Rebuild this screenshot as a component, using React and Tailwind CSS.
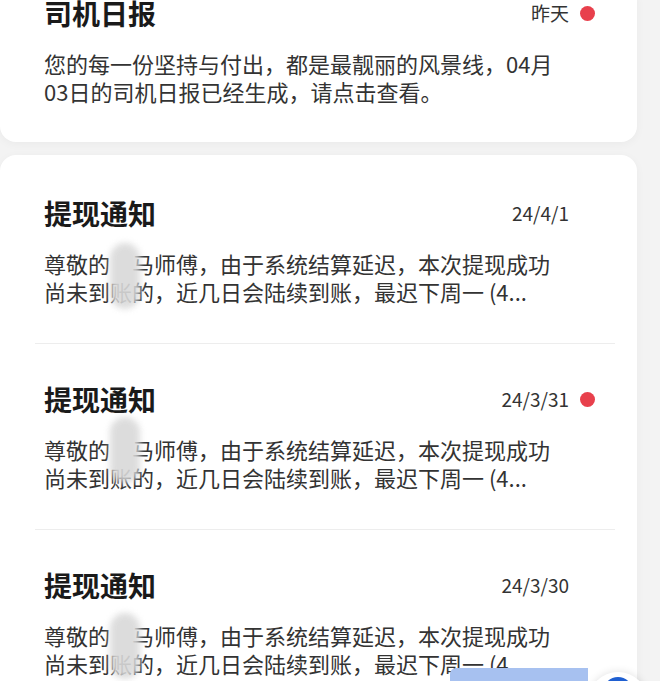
import React from 'react';

const notices = [
  { id: 1, title: '提现通知', date: '24/4/1', unread: false, blurTop: 'top-[-6px]' },
  { id: 2, title: '提现通知', date: '24/3/31', unread: true, blurTop: 'top-[-18px]' },
  { id: 3, title: '提现通知', date: '24/3/30', unread: false, blurTop: 'top-[-8px]' },
];

const Dot = ({ show }) => (
  <span className={`ml-[11px] h-[15px] w-[15px] shrink-0 rounded-full ${show ? 'bg-[#e8404c]' : 'bg-transparent'}`} />
);

const NoticeItem = ({ notice, first }) => (
  <div className={`${first ? 'pt-[40px]' : 'pt-[37px]'} pb-[38px] pl-[44px] pr-[42px]`}>
    <div className="flex items-center">
      <h3 className="flex-1 text-[28px] leading-[36px] font-bold text-[#1a1a1a]">{notice.title}</h3>
      <span className="text-[19px] leading-[36px] text-[#333]">{notice.date}</span>
      <Dot show={notice.unread} />
    </div>
    <div className="relative mt-[18px] w-[528px]">
      <p className="text-[22px] leading-[28px] text-[#333]">
        尊敬的<span className="inline-block w-[22px]" />马师傅，由于系统结算延迟，本次提现成功尚未到账的，近几日会陆续到账，最迟下周一 (4...
      </p>
      {/* name mosaic */}
      <div className={`pointer-events-none absolute ${notice.blurTop} left-[66px] h-[66px] w-[30px] rounded-full bg-[#d9d9d9] opacity-90 blur-[3px]`} />
    </div>
  </div>
);

export default function App() {
  return (
    <div
      className="relative h-[681px] w-[660px] overflow-hidden bg-[#f3f3f3]"
      style={{ fontFamily: '"Noto Sans CJK SC", "Noto Sans", sans-serif' }}
    >
      {/* daily report card */}
      <div className="w-[637px] rounded-b-2xl bg-white pb-[37px] pl-[44px] pr-[42px] shadow-[0_2px_10px_rgba(0,0,0,0.04)]">
        <div className="-mt-[5px] flex items-center">
          <h3 className="flex-1 text-[28px] leading-[36px] font-bold text-[#1a1a1a]">司机日报</h3>
          <span className="text-[19px] leading-[36px] text-[#333]">昨天</span>
          <Dot show />
        </div>
        <p className="mt-[18px] w-[528px] text-[22px] leading-[28px] text-[#333]">
          您的每一份坚持与付出，都是最靓丽的风景线，04月03日的司机日报已经生成，请点击查看。
        </p>
      </div>

      {/* withdrawal notices */}
      <div className="mt-[13px] w-[637px] rounded-t-2xl bg-white shadow-[0_2px_10px_rgba(0,0,0,0.04)]">
        {notices.map((n, i) => (
          <div key={n.id}>
            {i > 0 && <div className="ml-[35px] mr-[22px] h-px bg-[#ededed]" />}
            <NoticeItem notice={n} first={i === 0} />
          </div>
        ))}
      </div>

      {/* floating bits at the bottom edge */}
      <div className="absolute left-[450px] top-[668px] h-[20px] w-[138px] rounded-tl-md bg-[#a7c1f0]" />
      <div className="absolute left-[588px] top-[672px] flex h-[60px] w-[60px] items-start justify-center rounded-full bg-white pt-[5px] shadow-[0_0_8px_rgba(0,0,0,0.12)]">
        <div className="h-[30px] w-[30px] rounded-full bg-[#1f5fd1]" />
      </div>
    </div>
  );
}
